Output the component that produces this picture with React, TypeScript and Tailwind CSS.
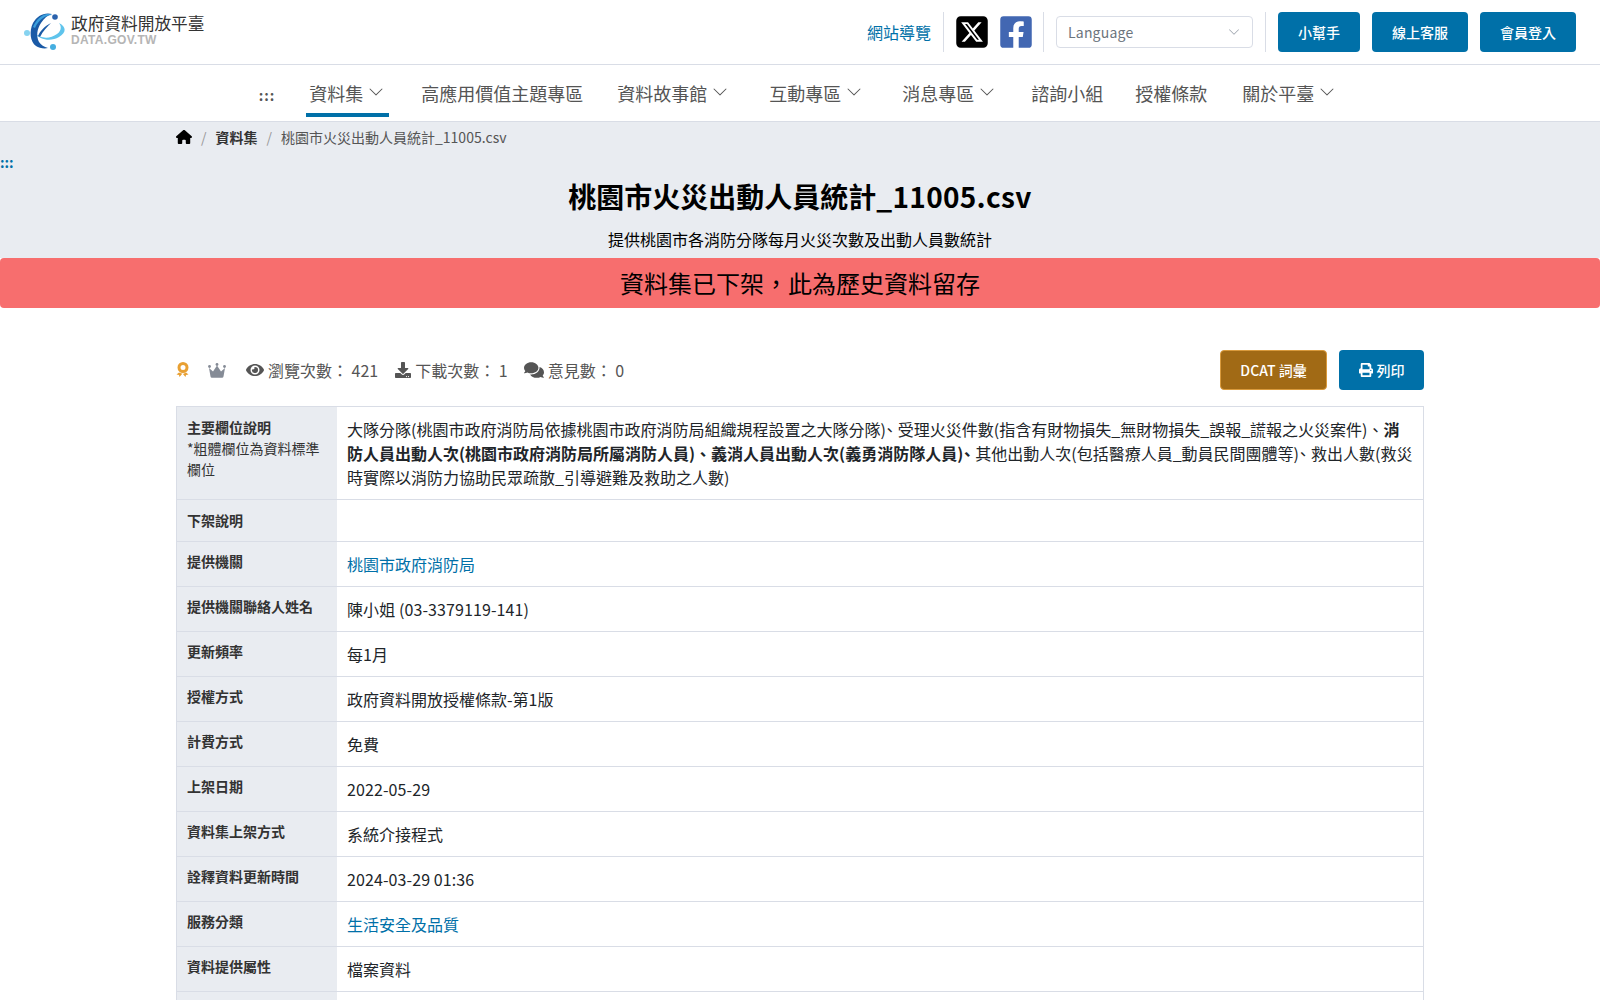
import { FaEye, FaDownload, FaComments, FaPrint, FaFacebookSquare } from 'react-icons/fa'
import { FaHouse, FaSquareXTwitter } from 'react-icons/fa6'
import { BsChevronDown } from 'react-icons/bs'

function Logo() {
  return (
    <svg viewBox="0 0 42 40" className="w-[42px] h-10 shrink-0">
      <path d="M10 21c6 7 17 9 25 4 7-4 8-10 0-14 3 4 2 8-2 11-7 5-16 5-23-1z" fill="#5fc4ec" />
      <path d="M28 2c-8-2-15 2-19 9-4 8-3 19 3 23 3 2 8 3 12 2-4-1-7-3-9-6-3-6-2-13 2-19 3-5 7-8 11-9z" fill="#1a5aa6" />
      <path d="M9 15c3-7 8-12 14-13 2 0 4 0 5 1-6 0-13 4-17 13z" fill="#3a9fdc" />
      <path d="M14 24c2-5 7-10 13-13-4 4-8 8-11 14z" fill="#1a5aa6" />
      <circle cx="31" cy="5" r="2.8" fill="#2a62ad" />
      <circle cx="3" cy="21" r="3" fill="#86d3f0" />
      <circle cx="29" cy="35" r="3" fill="#45aee0" />
    </svg>
  )
}

function MedalIcon() {
  return (
    <svg viewBox="0 0 14 16" className="w-[14px] h-4 shrink-0" fill="none">
      <circle cx="7" cy="5.5" r="4" stroke="#e8a033" strokeWidth="3" />
      <path d="M3 10.5l-2.5 2 2.5.5.5 2 3-3.5 3 3.5.5-2 2.5-.5-2.5-2-3 1.5z" fill="#e8a033" />
    </svg>
  )
}

function CrownIcon() {
  return (
    <svg viewBox="0 0 18 15" className="w-[18px] h-[15px] ml-[18px] shrink-0" fill="#858b96">
      <circle cx="1.5" cy="3.5" r="1.4" />
      <circle cx="9" cy="1.5" r="1.4" />
      <circle cx="16.5" cy="3.5" r="1.4" />
      <path d="M1 5l4 3.5L9 2.5l4 6L17 5l-1.5 8.5a1.5 1.5 0 0 1-1.5 1.2H4a1.5 1.5 0 0 1-1.5-1.2z" />
    </svg>
  )
}

function NavItem({ label, chevron, active, className = '' }: { label: string; chevron?: boolean; active?: boolean; className?: string }) {
  return (
    <div className={`flex items-center h-[52px] border-b-4 pt-2 ${active ? 'px-[3px] border-[#0070a8]' : 'px-1 border-transparent'} ${className}`}>
      <span>{label}</span>
      {chevron && <BsChevronDown className={`ml-[5px] w-4 h-4 -mt-0.5 ${active ? 'mr-[2px]' : 'mr-1'}`} />}
    </div>
  )
}

function Comma() {
  return <span className="[font-feature-settings:'palt'] tracking-[4px]">、</span>
}

const rows: { label: string; value: string; link?: boolean; latin?: boolean }[] = [
  { label: '提供機關', value: '桃園市政府消防局', link: true },
  { label: '提供機關聯絡人姓名', value: '陳小姐 (03-3379119-141)', latin: true },
  { label: '更新頻率', value: '每1月' },
  { label: '授權方式', value: '政府資料開放授權條款-第1版' },
  { label: '計費方式', value: '免費' },
  { label: '上架日期', value: '2022-05-29', latin: true },
  { label: '資料集上架方式', value: '系統介接程式' },
  { label: '詮釋資料更新時間', value: '2024-03-29 01:36', latin: true },
  { label: '服務分類', value: '生活安全及品質', link: true },
  { label: '資料提供屬性', value: '檔案資料' },
]

export default function App() {
  return (
    <div className="h-screen overflow-hidden bg-white text-[#212529] text-base font-['Noto_Sans_CJK_TC','Noto_Sans',sans-serif]">
      <header className="h-[65px] border-b border-[#d9dde6] flex items-center justify-between pl-6 pr-6">
        <div className="flex items-center gap-[5px]">
          <Logo />
          <div className="flex flex-col -mt-1">
            <span className="text-[16.7px] leading-[20px] text-[#333]">政府資料開放平臺</span>
            <span className="text-[12px] leading-[14px] font-bold text-[#b5b5b5] font-['Liberation_Sans',sans-serif] tracking-[0.3px]">DATA.GOV.TW</span>
          </div>
        </div>
        <div className="flex items-center">
          <a className="text-[#0070a8] mr-3">網站導覽</a>
          <div className="h-10 w-px bg-[#d9dde6]" />
          <FaSquareXTwitter className="w-9 h-9 ml-[10px] text-black" />
          <FaFacebookSquare className="w-9 h-9 ml-2 text-[#4267b2]" />
          <div className="h-10 w-px bg-[#d9dde6] ml-[9px]" />
          <div className="ml-3 w-[197px] h-8 border border-[#d9dde6] rounded flex items-center justify-between pl-[11px] pr-3 text-[14px] text-[#6c757d] tracking-[0.2px]">
            <span>Language</span>
            <BsChevronDown className="w-3 h-3 text-[#9aa1ab]" />
          </div>
          <div className="h-10 w-px bg-[#d9dde6] ml-3" />
          <div className="flex gap-3 ml-3 text-sm font-medium text-white">
            <button className="h-10 w-[82px] rounded bg-[#0070a8]">小幫手</button>
            <button className="h-10 w-24 rounded bg-[#0070a8]">線上客服</button>
            <button className="h-10 w-24 rounded bg-[#0070a8]">會員登入</button>
          </div>
        </div>
      </header>

      <nav className="h-[57px] pl-1 border-b border-[#d9dde6] flex justify-center items-start gap-[27px] text-[18px] text-[#555]">
        <div className="h-[52px] flex items-center text-[14px] tracking-[1px] pt-2 mr-1 font-bold">:::</div>
        <NavItem label="資料集" chevron active className="mr-px" />
        <NavItem label="高應用價值主題專區" className="-mr-px" />
        <NavItem label="資料故事館" chevron className="mr-[2px]" />
        <NavItem label="互動專區" chevron className="mr-px" />
        <NavItem label="消息專區" chevron className="-mr-[3px]" />
        <NavItem label="諮詢小組" className="-mr-[3px]" />
        <NavItem label="授權條款" />
        <NavItem label="關於平臺" chevron className="pr-[6px]" />
      </nav>

      <section className="bg-[#e9ecf1] h-[136px] flex flex-col">
        <div className="w-[1248px] mx-auto flex items-center h-[30px] text-sm text-[#555]">
          <FaHouse className="w-4 h-4 text-black" />
          <span className="mx-[9px] text-[#999]">/</span>
          <span className="font-bold text-[#333]">資料集</span>
          <span className="mx-[9px] text-[#999]">/</span>
          <span>桃園市火災出動人員統計_11005.csv</span>
        </div>
        <div className="text-[#0070a8] text-[14px] leading-[16px] font-bold mt-[2px]">:::</div>
        <h1 className="text-center text-[28px] leading-[42px] font-bold text-black mt-[5px]">
          桃園市火災出動人員統計<span className="tracking-[0.3px]">_11005.csv</span>
        </h1>
        <p className="text-center text-black leading-6 mt-[10px]">提供桃園市各消防分隊每月火災次數及出動人員數統計</p>
      </section>

      <div className="h-[50px] bg-[#f76e6e] rounded text-center text-2xl leading-[50px] text-black">資料集已下架，此為歷史資料留存</div>

      <main className="w-[1248px] mx-auto pt-[42px]">
        <div className="flex items-center h-10 text-[#555]">
          <MedalIcon />
          <CrownIcon />
          <FaEye className="w-[18px] h-[18px] ml-5" />
          <span className="ml-1">瀏覽次數： 421</span>
          <FaDownload className="w-4 h-4 ml-[17px]" />
          <span className="ml-1">下載次數： 1</span>
          <FaComments className="w-5 h-5 ml-4" />
          <span className="ml-1">意見數： 0</span>
          <div className="ml-auto flex gap-3 text-sm font-medium text-white">
            <button className="h-10 w-[107px] rounded bg-[#a16a15] border border-[#d99a3c]">DCAT 詞彙</button>
            <button className="h-10 w-[85px] rounded bg-[#0070a8] flex items-center justify-center gap-1">
              <FaPrint className="w-3.5 h-3.5" />
              列印
            </button>
          </div>
        </div>

        <table className="w-full mt-4 border-collapse border border-[#d9dde6] table-fixed">
          <tbody>
            <tr className="border-b border-[#d9dde6]">
              <th className="w-[160px] bg-[#e9ecf1] p-[10px] text-left align-top text-sm leading-[21px] font-normal text-[#333]">
                <b className="font-bold">主要欄位說明</b>
                <br />
                *粗體欄位為資料標準欄位
              </th>
              <td className="py-[10px] pl-[10.5px] pr-0 align-top">
                大隊分隊(桃園市政府消防局依據桃園市政府消防局組織規程設置之大隊分隊)<Comma />受理火災件數(指含有財物損失_無財物損失_誤報_謊報之火災案件)、<b>消<br />防人員出動人次(桃園市政府消防局所屬消防人員)、義消人員出動人次(義勇消防隊人員)<Comma /></b>其他出動人次(包括醫療人員_動員民間團體等)<Comma />救出人數(救災<br />時實際以消防力協助民眾疏散_引導避難及救助之人數)
              </td>
            </tr>
            <tr className="border-b border-[#d9dde6]">
              <th className="bg-[#e9ecf1] p-[10px] text-left align-top text-sm leading-[21px] font-bold text-[#333]">下架說明</th>
              <td className="p-[10px]" />
            </tr>
            {rows.map((r) => (
              <tr key={r.label} className="border-b border-[#d9dde6]">
                <th className="bg-[#e9ecf1] px-[10px] pt-[9px] pb-[11px] text-left align-top text-sm leading-[21px] font-bold text-[#333]">{r.label}</th>
                <td className={`py-[10px] pl-[10.5px] pr-[10px] align-top ${r.link ? 'text-[#0070a8]' : ''} ${r.latin ? 'tracking-[0.1px]' : ''}`}>{r.value}</td>
              </tr>
            ))}
            <tr>
              <th className="bg-[#e9ecf1] p-[10px] h-[45px]" />
              <td className="p-[10px]" />
            </tr>
          </tbody>
        </table>
      </main>
    </div>
  )
}
